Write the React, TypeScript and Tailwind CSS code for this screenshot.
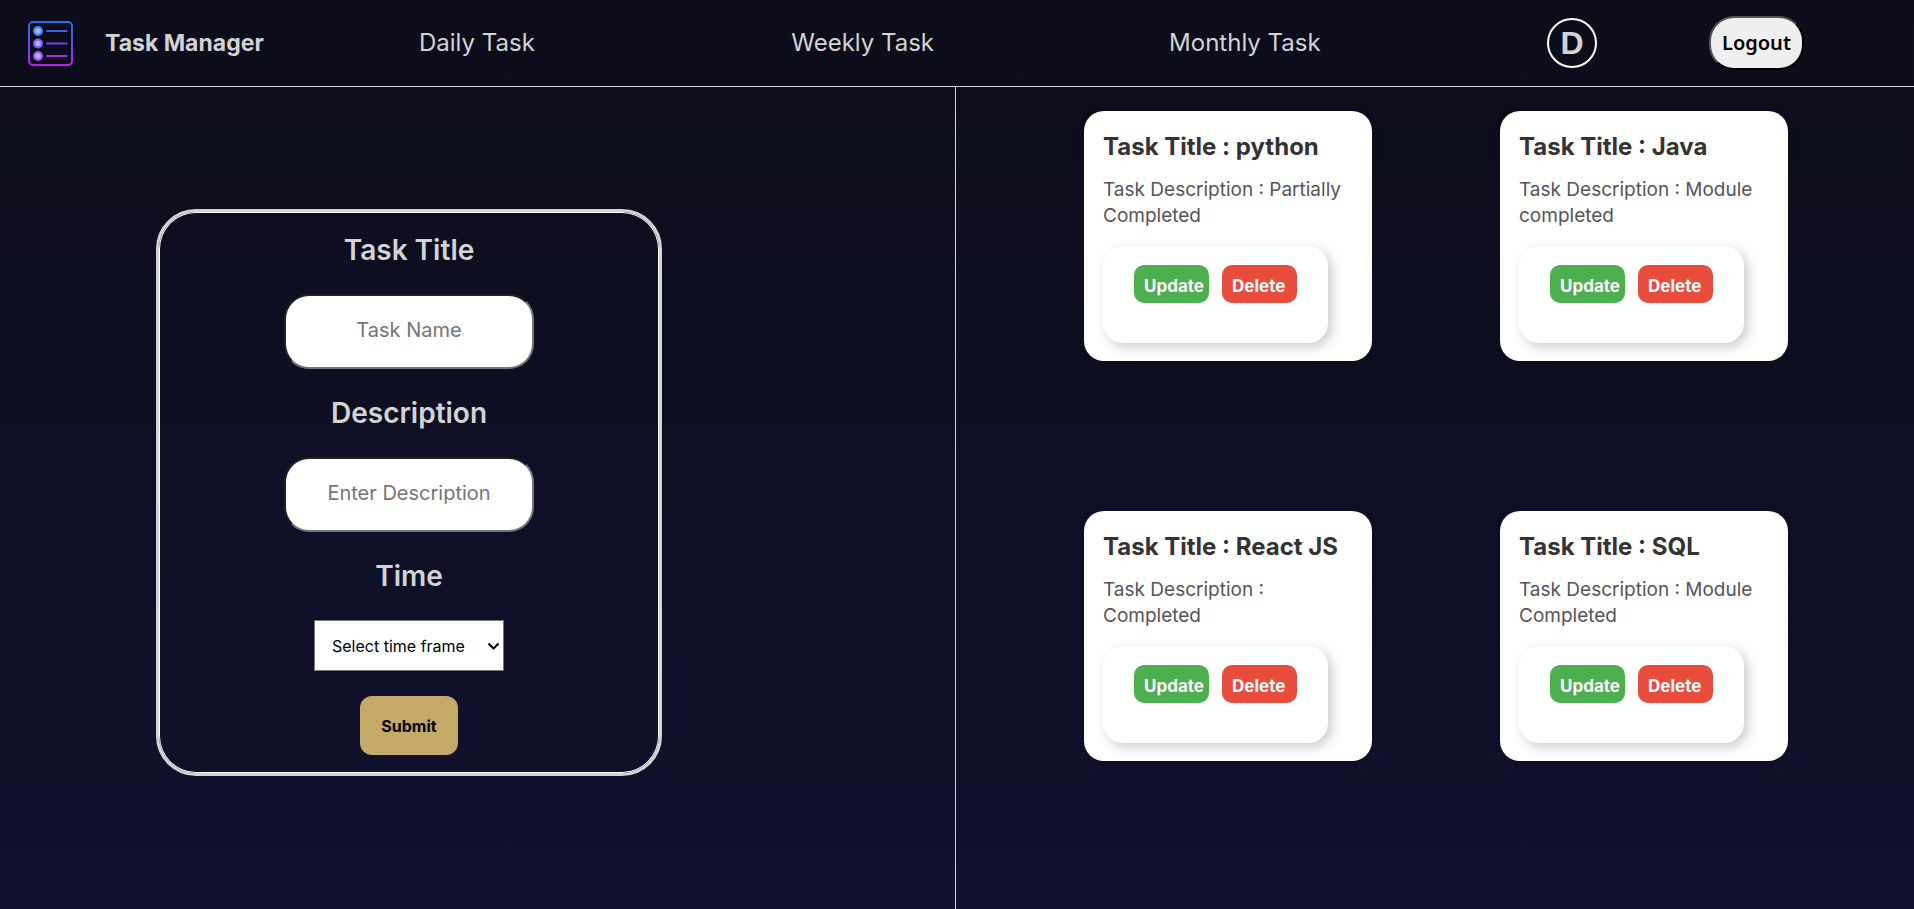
import React from "react";

const tasks = [
  { title: "python", description: "Partially Completed" },
  { title: "Java", description: "Module completed" },
  { title: "React JS", description: "Completed" },
  { title: "SQL", description: "Module Completed" },
];

function Logo() {
  const rows = [
    { y: 10, dot: "#4f7dff", line: "#3d63f5" },
    { y: 22.5, dot: "#7a5cff", line: "#6d45f5" },
    { y: 35, dot: "#a64dff", line: "#9a35e0" },
  ];
  return (
    <svg width="45" height="45" viewBox="0 0 45 45" fill="none" aria-hidden="true">
      <defs>
        <linearGradient id="frame" x1="0" y1="0" x2="0" y2="1">
          <stop offset="0" stopColor="#2070f0" />
          <stop offset="0.5" stopColor="#6a48f5" />
          <stop offset="1" stopColor="#bf20e8" />
        </linearGradient>
      </defs>
      <rect x="1" y="1" width="43" height="43" rx="4" stroke="url(#frame)" strokeWidth="2" />
      {rows.map((r) => (
        <g key={r.y}>
          <circle cx="10" cy={r.y} r="5" fill={r.dot} />
          <circle cx="10" cy={r.y} r="2.8" fill="#a9b4ff" />
          <path d={`M19 ${r.y}H38.5`} stroke={r.line} strokeWidth="2" strokeLinecap="round" />
        </g>
      ))}
    </svg>
  );
}

function TaskCard({ title, description }: { title: string; description: string }) {
  return (
    <article className="flex h-[250px] w-72 flex-col items-start rounded-[20px] bg-white px-[19px] pt-5 shadow-[0_4px_8px_rgba(0,0,0,0.2)]">
      <h2 className="text-2xl leading-8 font-bold whitespace-nowrap text-[#333]">{`Task Title : ${title}`}</h2>
      <p className="mt-[14px] text-[19px] leading-[26px] text-[#555]">{`Task Description : ${description}`}</p>
      <div className="mt-[17px] flex h-[97px] w-[225px] items-start justify-center gap-[13px] rounded-[20px] bg-white pt-[19px] shadow-[4px_4px_12px_rgba(0,0,0,0.2)]">
        <button className="h-[38px] w-[75px] rounded-[10px] bg-[#4caf50] pt-1.5 pl-[10px] text-left text-[17px] font-bold text-white">
          Update
        </button>
        <button className="h-[38px] w-[75px] rounded-[10px] bg-[#e74c3c] pt-1.5 pl-[10px] text-left text-[17px] font-bold text-white">
          Delete
        </button>
      </div>
    </article>
  );
}

export default function App() {
  return (
    <div className="flex min-h-screen flex-col bg-linear-to-b from-[#0c0c1a] to-[#11112f] font-['Inter',sans-serif] text-[#d3d3d3]">
      <header className="flex h-[87px] items-center border-b border-[#d3d3d3] pl-7">
        <Logo />
        <h1 className="ml-8 w-[314px] text-[23px] font-bold">Task Manager</h1>
        <nav className="flex grow text-2xl">
          <a href="#daily" className="w-[33%]">Daily Task</a>
          <a href="#weekly" className="w-[33.5%]">Weekly Task</a>
          <a href="#monthly">Monthly Task</a>
        </nav>
        <div className="flex w-[367px] items-center justify-between pr-[110px]">
          <span className="flex size-[50px] items-center justify-center rounded-full border-2 border-white font-['Liberation_Sans',sans-serif] text-[32px] font-bold">D</span>
          <button className="h-[54px] w-[95px] rounded-[25px] border-2 border-black [border-style:outset] bg-[#efefef] font-['Noto_Sans',sans-serif] text-xl font-semibold text-black">
            Logout
          </button>
        </div>
      </header>
      <main className="grid grow grid-cols-[calc(50%-1px)_1fr]">
        <section className="border-r border-[#d3d3d3] pt-[122px] pl-[156px]">
          <form className="flex h-[567px] w-[506px] flex-col items-center rounded-[40px] border-3 border-[#d3d3d3] pt-[18px] shadow-[inset_0_0_0_1px_#fff]">
            <label htmlFor="name" className="text-[28px] leading-10 font-semibold">Task Title</label>
            <input id="name" placeholder="Task Name" className="mt-6 h-[75px] w-[250px] rounded-[25px] border-2 border-[#767676] [border-style:inset] bg-white pb-1 text-center text-xl text-black placeholder:text-[#757575]" />
            <label htmlFor="description" className="mt-6 text-[28px] leading-10 font-semibold">Description</label>
            <input id="description" placeholder="Enter Description" className="mt-6 h-[75px] w-[250px] rounded-[25px] border-2 border-[#767676] [border-style:inset] bg-white pb-1 text-center text-xl text-black placeholder:text-[#757575]" />
            <label htmlFor="time" className="mt-6 text-[28px] leading-10 font-semibold">Time</label>
            <div className="relative mt-6">
              <select id="time" className="block h-[51px] w-[190px] appearance-none border border-[#767676] bg-white pl-[17px] text-base text-black">
                <option>Select time frame</option>
                <option>Daily</option>
                <option>Weekly</option>
                <option>Monthly</option>
              </select>
              <svg className="pointer-events-none absolute top-[22px] right-1" width="13" height="9" viewBox="0 0 13 9" fill="none" aria-hidden="true">
                <path d="M1.5 1.5L6.5 6.5L11.5 1.5" stroke="#000" strokeWidth="2" />
              </svg>
            </div>
            <button type="button" className="mt-[25px] h-[59px] w-[98px] rounded-[12px] bg-[#c4a968] text-base font-bold text-black">Submit</button>
          </form>
        </section>
        <section className="grid auto-rows-[400px] grid-cols-[288px_288px] content-start gap-x-32 pt-6 pl-32">
          {tasks.map((t) => (
            <TaskCard key={t.title} {...t} />
          ))}
        </section>
      </main>
    </div>
  );
}
